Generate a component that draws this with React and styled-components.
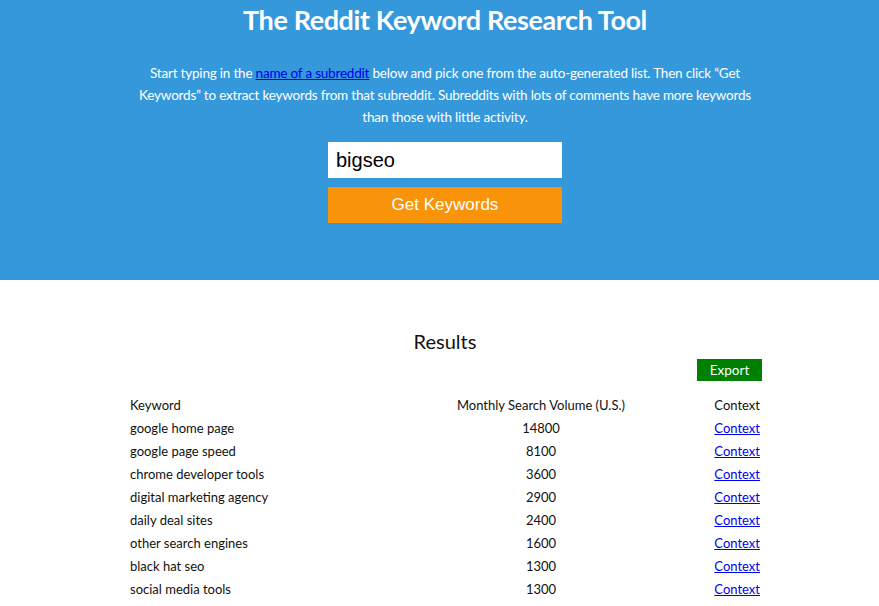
import React from 'react';
import styled, { createGlobalStyle } from 'styled-components';

const GlobalStyle = createGlobalStyle`
  body {
    margin: 0;
    font-family: Lato, 'Open Sans', sans-serif;
    color: #111;
    background: #fff;
  }
`;

const rows = [
  ['google home page', 14800],
  ['google page speed', 8100],
  ['chrome developer tools', 3600],
  ['digital marketing agency', 2900],
  ['daily deal sites', 2400],
  ['other search engines', 1600],
  ['black hat seo', 1300],
  ['social media tools', 1300],
];

const App = () => {
  return (
    <>
      <GlobalStyle />
      <Hero>
        <Title>The Reddit Keyword Research Tool</Title>
        <Intro>
          Start typing in the <a href="#">name of a subreddit</a> below and pick one from the
          auto-generated list. Then click “Get Keywords” to extract keywords from that subreddit.
          Subreddits with lots of comments have more keywords than those with little activity.
        </Intro>
        <Form>
          <SearchInput defaultValue="bigseo" />
          <SubmitButton>Get Keywords</SubmitButton>
        </Form>
      </Hero>
      <Main>
        <ResultsSection>
          <ResultsTitle>Results</ResultsTitle>
          <ExportRow>
            <ExportButton>Export</ExportButton>
          </ExportRow>
          <Table>
            <colgroup>
              <col style={{ width: 292 }} />
              <col style={{ width: 238 }} />
              <col style={{ width: 100 }} />
            </colgroup>
            <thead>
              <tr>
                <Cell>Keyword</Cell>
                <Cell align="center">Monthly Search Volume (U.S.)</Cell>
                <Cell align="right">Context</Cell>
              </tr>
            </thead>
            <tbody>
              {rows.map(([kw, vol]) => (
                <tr key={kw}>
                  <Cell>{kw}</Cell>
                  <Cell align="center">{vol}</Cell>
                  <Cell align="right">
                    <a href="#">Context</a>
                  </Cell>
                </tr>
              ))}
            </tbody>
          </Table>
        </ResultsSection>
      </Main>
    </>
  );
};

export default App;

const Hero = styled.header`
  background: #3598db;
  height: 280px;
  box-sizing: border-box;
  padding-left: 11px;
  display: flex;
  flex-direction: column;
  align-items: center;
  color: #fff;
`;

const Title = styled.h1`
  margin: 0;
  font-size: 27px;
  line-height: 40px;
  font-weight: 700;
  letter-spacing: -0.4px;
`;

const Intro = styled.p`
  margin: 22px 0 0;
  width: 618px;
  text-align: center;
  font-size: 13.5px;
  line-height: 22px;
  letter-spacing: -0.2px;
  a {
    color: #0000ee;
  }
`;

const Form = styled.div`
  margin-top: 14px;
  width: 234px;
  display: flex;
  flex-direction: column;
  gap: 9px;
`;

const SearchInput = styled.input`
  box-sizing: border-box;
  height: 36px;
  border: none;
  outline: none;
  padding: 0 8px;
  font-family: 'Liberation Sans', Arial, sans-serif;
  font-size: 20px;
  color: #000;
`;

const SubmitButton = styled.button`
  height: 36px;
  border: none;
  background: #f8930a;
  color: #fff;
  font-family: 'Liberation Sans', Arial, sans-serif;
  font-size: 17px;
  cursor: pointer;
`;

const Main = styled.main`
  padding-left: 11px;
`;

const ResultsSection = styled.section`
  width: 630px;
  margin: 0 auto;
  padding-top: 46px;
`;

const ResultsTitle = styled.h2`
  margin: 0;
  text-align: center;
  font-size: 20px;
  line-height: 30px;
  font-weight: 400;
`;

const ExportRow = styled.div`
  display: flex;
  justify-content: flex-end;
  margin-top: 3px;
  margin-right: -2px;
`;

const ExportButton = styled.button`
  width: 65px;
  height: 22px;
  border: none;
  background: #008000;
  color: #fff;
  font-family: Lato, 'Open Sans', sans-serif;
  font-size: 13.5px;
  padding: 0;
  cursor: pointer;
`;

const Table = styled.table`
  width: 100%;
  margin-top: 12px;
  border-collapse: collapse;
  table-layout: fixed;
  font-size: 13px;
`;

const Cell = styled.td`
  padding: 0;
  height: 23px;
  text-align: ${({ align }) => align || 'left'};
  a {
    color: #0000ee;
  }
`;
